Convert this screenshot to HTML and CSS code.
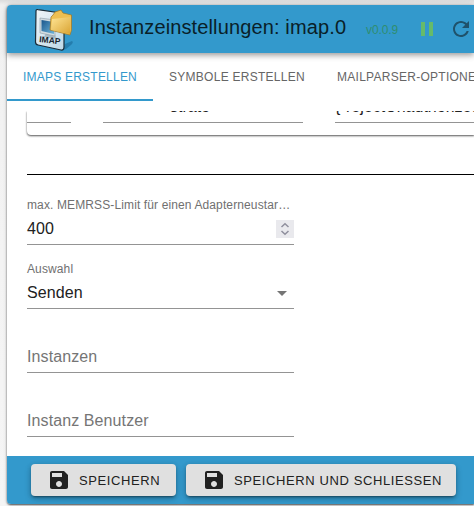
FILE: index.html
```html
<!DOCTYPE html>
<html lang="de">
<head>
<meta charset="utf-8">
<title>Instanzeinstellungen</title>
<link rel="stylesheet" href="styles.css">
</head>
<body>
<div class="dialog">
  <header class="bar">
    <svg class="logo" width="42" height="44" viewBox="0 0 42 44">
      <defs>
        <linearGradient id="paper" x1="0" y1="0" x2="1" y2="1"><stop offset="0" stop-color="#f0f5f8"/><stop offset="1" stop-color="#bdd8e8"/></linearGradient>
        <linearGradient id="screen" x1="0" y1="0" x2="1" y2="1"><stop offset="0" stop-color="#1a568c"/><stop offset="1" stop-color="#6fb5da"/></linearGradient>
        <linearGradient id="folder" x1="0" y1="0" x2="1" y2="1"><stop offset="0" stop-color="#ffe595"/><stop offset="1" stop-color="#d9a332"/></linearGradient>
      </defs>
      <path d="M29 42 31 36 38 33Q40 34 37 37L32 41Z" fill="#176694" opacity=".55"/>
      <path d="M2 3Q2 1.200 4 1.600L27 5Q30 5.500 30 8V39Q30 42.500 27 42L4 37Q1.500 36.500 1.500 34Z" fill="url(#paper)" stroke="#192c38" stroke-width="1.200"/>
      <path d="M12 25 21 27 23 31 10 29Z" fill="#a9bac5"/>
      <path d="M6 10 21 12V28L6 25Z" fill="#d2dce1" stroke="#8b9ba4" stroke-width=".6"/>
      <path d="M7.500 12 20 14V26L7.500 23Z" fill="url(#screen)"/>
      <path d="M17 9 19 7 21 4 27 2 29 5 37.500 7V22L36 27 16 22Z" fill="#eebf51" stroke="#9f7521" stroke-width=".7"/>
      <path d="M18 11 28 10 37 9 36 26 17 22Z" fill="url(#folder)"/>
      <text x="5" y="34" class="logo-text" transform="rotate(6 5 34)">IMAP</text>
    </svg>
    <h1 class="title">Instanzeinstellungen: imap.0</h1>
    <span class="version">v0.0.9</span>
    <svg class="pause" width="24" height="24" viewBox="0 0 24 24"><path d="M6 19h4V5H6v14zm8-14v14h4V5h-4z"/></svg>
    <svg class="reload" width="24" height="24" viewBox="0 0 24 24"><path d="M17.650 6.350C16.200 4.900 14.210 4 12 4c-4.420 0-7.990 3.580-7.990 8s3.570 8 7.990 8c3.730 0 6.840-2.550 7.730-6h-2.080c-.82 2.330-3.040 4-5.650 4-3.310 0-6-2.690-6-6s2.690-6 6-6c1.660 0 3.140.69 4.220 1.780L13 11h7V4l-2.350 2.350z"/></svg>
  </header>
  <nav class="tabs">
    <a class="tab active">IMAPS ERSTELLEN</a>
    <a class="tab symbols">SYMBOLE ERSTELLEN</a>
    <a class="tab">MAILPARSER-OPTIONEN</a>
  </nav>
  <main class="content">
    <div class="table">
      <div class="cell port"></div>
      <div class="cell host">strato</div>
      <div class="cell options">{"rejectUnauthorized": false}</div>
    </div>
    <hr class="divider">
    <section class="form">
      <div class="field">
        <label>max. MEMRSS-Limit für einen Adapterneustar…</label>
        <div class="value">400
          <svg class="spinner" width="18" height="18" viewBox="0 0 18 18"><path d="M5.500 7 9 3.700 12.500 7M5.500 11 9 14.300 12.500 11"/></svg>
        </div>
      </div>
      <div class="field">
        <label>Auswahl</label>
        <div class="value">Senden
          <svg class="arrow" width="24" height="24" viewBox="0 0 24 24"><path d="M7 10l5 5 5-5z"/></svg>
        </div>
      </div>
      <div class="field"><label></label><div class="value placeholder">Instanzen</div></div>
      <div class="field"><label></label><div class="value placeholder">Instanz Benutzer</div></div>
    </section>
  </main>
  <footer class="actions">
    <button class="save"><svg width="24" height="24" viewBox="0 0 24 24"><path d="M17 3H5c-1.110 0-2 .9-2 2v14c0 1.100.89 2 2 2h14c1.100 0 2-.9 2-2V7l-4-4zm-5 16c-1.660 0-3-1.340-3-3s1.340-3 3-3 3 1.340 3 3-1.340 3-3 3zm3-10H5V5h10v4z"/></svg><span>SPEICHERN</span></button>
    <button class="save-close"><svg width="24" height="24" viewBox="0 0 24 24"><path d="M17 3H5c-1.110 0-2 .9-2 2v14c0 1.100.89 2 2 2h14c1.100 0 2-.9 2-2V7l-4-4zm-5 16c-1.660 0-3-1.340-3-3s1.340-3 3-3 3 1.340 3 3-1.340 3-3 3zm3-10H5V5h10v4z"/></svg><span>SPEICHERN UND SCHLIESSEN</span></button>
  </footer>
</div>
</body>
</html>
```
FILE: styles.css
```css
* { box-sizing: border-box; }
body {
  margin: 0;
  height: 506px;
  padding: 5px 0 0 7px;
  overflow: hidden;
  background: linear-gradient(#dcdcdc, #f1f1f1 5px, #f5f5f5);
  font-family: "Liberation Sans", Arial, sans-serif;
  color: #212121;
}
.dialog {
  width: 100%;
  height: 499px;
  display: flex;
  flex-direction: column;
  border-radius: 4px 0 0 4px;
  background: #fff;
  box-shadow: 0 1px 2px rgba(0,0,0,.65), 0 0 4px rgba(0,0,0,.15);
}
.bar {
  position: relative;
  flex: 0 0 48px;
  display: flex;
  align-items: center;
  padding-left: 27px;
  overflow: hidden;
  background: #3399cc;
  border-radius: 4px 0 0;
  box-shadow: 0 2px 4px -1px rgba(0,0,0,.2), 0 4px 5px rgba(0,0,0,.14), 0 1px 10px rgba(0,0,0,.12);
}
.logo { flex: none; margin-top: 1px; }
.logo-text { font-size: 8.5px; font-weight: bold; fill: #17242d; }
.title {
  flex: none;
  width: 258px;
  margin: -4px 0 0 13px;
  font-size: 20px;
  line-height: 32px;
  font-weight: 400;
  letter-spacing: .13px;
  white-space: nowrap;
  color: #0a1f29;
}
.version { flex: none; width: 48px; margin: 2px 0 0 19px; font-size: 12px; letter-spacing: -.1px; color: #2f8e70; }
.pause { flex: none; margin-left: 1px; fill: #66bb6a; }
.reload { flex: none; margin-left: 10px; fill: #1f526b; }
.tabs {
  flex: 0 0 48px;
  display: flex;
  overflow: hidden;
}
.tab {
  flex: none;
  padding: 17px 16px 0;
  font-size: 12px;
  line-height: 14px;
  letter-spacing: .27px;
  white-space: nowrap;
  color: #666;
}
.active { width: 146px; border-bottom: 2px solid #3399cc; letter-spacing: .22px; color: #3399cc; }
.symbols { width: 168px; }
.content {
  height: 345px;
  margin: 10px 0 0 18px;
  padding-left: 2px;
  overflow: hidden;
}
.table {
  display: flex;
  gap: 32px;
  height: 24px;
  border-radius: 0 0 0 4px;
  box-shadow: 0 1px 2px rgba(0,0,0,.45), 0 1px 2px rgba(0,0,0,.3);
}
.cell {
  flex: none;
  display: flex;
  align-items: flex-end;
  height: 12px;
  padding-bottom: 6px;
  border-bottom: 1px solid #949494;
  font-size: 16px;
  line-height: 18px;
  white-space: nowrap;
  overflow: hidden;
}
.port { width: 44px; }
.host { width: 200px; padding-left: 67px; }
.options { width: 200px; }
.divider { margin: 39px 0 0; border: 0; border-top: 1px solid #000; }
.form { width: 267px; padding-top: 22px; }
.field { height: 48px; margin-bottom: 16px; border-bottom: 1px solid #949494; }
.field label {
  display: block;
  height: 16px;
  font-size: 12px;
  line-height: 16px;
  letter-spacing: .12px;
  white-space: nowrap;
  color: #707070;
}
.value {
  height: 31px;
  display: flex;
  align-items: center;
  justify-content: space-between;
  font-size: 16px;
  letter-spacing: .1px;
}
.placeholder { color: #757575; }
.spinner { background: #e9e9ed; fill: none; stroke: #8f8f9d; stroke-width: 1.5; }
.arrow { fill: #757575; }
.actions {
  flex: 0 0 48px;
  display: flex;
  align-items: center;
  gap: 10px;
  padding-left: 24px;
  background: #3399cc;
  border-radius: 0 0 0 4px;
}
button {
  flex: none;
  display: flex;
  align-items: center;
  gap: 8px;
  height: 32px;
  padding: 0 0 0 16px;
  border: 0;
  border-radius: 4px;
  background: #e0e0e0;
  box-shadow: 0 3px 1px -2px rgba(0,0,0,.2), 0 2px 2px rgba(0,0,0,.14), 0 1px 5px rgba(0,0,0,.12), 0 3px 7px rgba(0,0,0,.2);
  font: 13px "Liberation Sans", Arial, sans-serif;
  letter-spacing: .6px;
  white-space: nowrap;
  color: #212121;
}
button svg { flex: none; width: 24px; fill: #212121; }
.save { width: 145px; }
.save-close { width: 270px; }
```
